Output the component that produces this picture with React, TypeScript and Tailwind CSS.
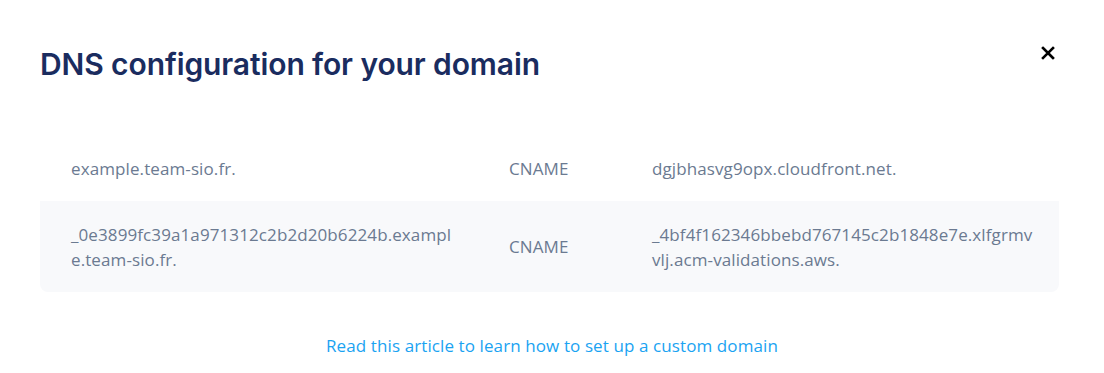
import React from "react";

const rows = [
  { name: "example.team-sio.fr.", type: "CNAME", value: "dgjbhasvg9opx.cloudfront.net." },
  {
    name: "_0e3899fc39a1a971312c2b2d20b6224b.example.team-sio.fr.",
    type: "CNAME",
    value: "_4bf4f162346bbebd767145c2b1848e7e.xlfgrmvvlj.acm-validations.aws.",
  },
];

export default function App() {
  return (
    <div className="w-[1104px] h-[373px] bg-white px-10 pt-[42px] font-['Open_Sans',sans-serif]">
      <div className="flex items-start justify-between">
        <h1 className="font-['Inter',sans-serif] font-semibold text-[30px] leading-[44px] text-[#1a2c5f] tracking-[-0.1px]">
          DNS configuration for your domain
        </h1>
        <button className="mt-[1px] mr-[9px] text-black">
          <svg width="14" height="14" viewBox="0 0 14 14" className="mt-[3px]">
            <path d="M2 2 L12 12 M12 2 L2 12" stroke="#000" strokeWidth="2.6" strokeLinecap="square" />
          </svg>
        </button>
      </div>
      <div className="mt-[49px] mr-[5px]">
        {rows.map((r, i) => (
          <div
            key={i}
            className={`flex items-center py-[20.5px] text-[17px] leading-[25px] tracking-[0.1px] text-[#6b7a91] ${
              i % 2 === 1 ? "bg-[#f8f9fb] rounded-b-[8px]" : ""
            }`}
          >
            <div className="w-[438px] pl-[31px] pr-[24px] break-all">{r.name}</div>
            <div className="w-[143px] px-[31px]">{r.type}</div>
            <div className="flex-1 pl-[31px] pr-[20px] break-all">{r.value}</div>
          </div>
        ))}
      </div>
      <div className="mt-[41px] text-center">
        <a className="text-[17px] leading-[25px] tracking-[0.1px] text-[#1aa3f2]" href="#">
          Read this article to learn how to set up a custom domain
        </a>
      </div>
    </div>
  );
}
